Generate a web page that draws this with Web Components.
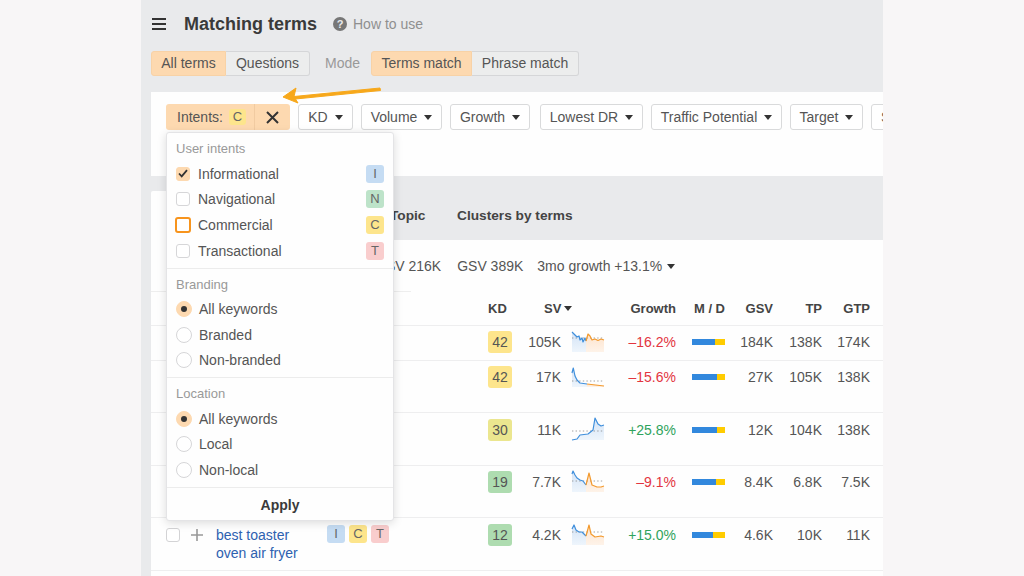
<!DOCTYPE html>
<html lang="en"><head><meta charset="utf-8"><title>Matching terms</title>
<style>
html,body{margin:0;height:100%;overflow:hidden}
body{background:#f8f6f7;font:14px/18px "Liberation Sans",Arial,sans-serif;color:#555;width:1024px;height:576px}
</style></head><body>
<x-app>
  <x-topbar title-text="Matching terms" help="How to use"></x-topbar>
  <x-controls></x-controls>
  <x-filters></x-filters>
  <x-tabs></x-tabs>
  <x-table>
    <x-summary></x-summary>
    <x-head></x-head>
    <x-row h="35" kd="42" kc="#fde58c" sv="105K" growth="–16.2%" neg sp="1" split="71" gsv="184K" tp="138K" gtp="174K"></x-row>
    <x-row h="52" kd="42" kc="#fde58c" sv="17K" growth="–15.6%" neg sp="2" split="76" gsv="27K" tp="105K" gtp="138K"></x-row>
    <x-row h="53" kd="30" kc="#ebe68f" sv="11K" growth="+25.8%" sp="3" split="75" gsv="12K" tp="104K" gtp="138K"></x-row>
    <x-row h="52" kd="19" kc="#aedcb0" sv="7.7K" growth="–9.1%" neg sp="4" split="72" gsv="8.4K" tp="6.8K" gtp="7.5K"></x-row>
    <x-row h="53" kd="12" kc="#aedcb0" sv="4.2K" growth="+15.0%" sp="5" split="64" gsv="4.6K" tp="10K" gtp="11K" control>
      <span slot="kw">best toaster oven air fryer</span>
      <x-badge slot="intents" kind="I">I</x-badge><x-badge slot="intents" kind="C">C</x-badge><x-badge slot="intents" kind="T">T</x-badge>
    </x-row>
  </x-table>
  <x-menu></x-menu>
  <x-arrow></x-arrow>
</x-app>
<script>
const def=(name,css,html)=>customElements.define(name,class extends HTMLElement{
  constructor(){super();this.attachShadow({mode:'open'})}
  connectedCallback(){const a=n=>this.getAttribute(n);this.shadowRoot.innerHTML=`<style>${css}</style>`+(typeof html==='function'?html(a,this):html);}
});
const COL={I:'#c5dcf3',N:'#bde3c9',C:'#fde58c',T:'#f9cdcd'};
def('x-app',`:host{display:block;position:relative;margin-left:141px;width:742px;height:576px;background:#e9eaec;overflow:hidden}`,`<slot></slot>`);
def('x-topbar',`:host{display:flex;align-items:center;height:48px;padding-left:11px;color:#333}
.b{width:14px;display:flex;flex-direction:column;gap:3px;margin-right:18px}.b i{height:2px;background:#333;display:block}
h1{font:bold 18px/24px "Liberation Sans",Arial,sans-serif;margin:0;color:#3a3a3a;width:149px}
.q{width:14px;height:14px;border-radius:50%;background:#777;color:#e9eaec;font:bold 11px/14px "Liberation Sans",sans-serif;text-align:center;margin-right:6px}
.h{color:#8f8f8f;font-size:14px}`,
 a=>`<div class="b"><i></i><i></i><i></i></div><h1>${a('title-text')}</h1><span class="q">?</span><span class="h">${a('help')}</span>`);
def('x-toggle',`:host{display:inline-flex;align-items:center;justify-content:center;height:25px;box-sizing:border-box;background:#eceded;border:1px solid #d5d6d8;color:#555;font-size:14px;padding-bottom:1px}
:host([on]){background:#fdd9b0;border-color:#f8d2a6;color:#555}
:host([first]){border-radius:3px 0 0 3px}:host([last]){border-radius:0 3px 3px 0;border-left:0}`,`<slot></slot>`);
def('x-controls',`:host{display:flex;align-items:center;margin:3px 0 16px 10px;height:25px}
x-toggle{flex:none}.m{color:#999;margin:0 10px 0 15px;width:36px;font-size:14px;padding-bottom:1px}`,
 `<x-toggle on first style="width:75px">All terms</x-toggle><x-toggle last style="width:84px">Questions</x-toggle><span class="m">Mode</span><x-toggle on first style="width:101px">Terms match</x-toggle><x-toggle last style="width:107px">Phrase match</x-toggle>`);
def('x-filter',`:host{display:inline-flex;align-items:center;justify-content:center;gap:7px;height:26px;box-sizing:border-box;background:#fff;border:1px solid #d9dadb;border-radius:3px;flex:none;color:#555;font-size:14px;white-space:nowrap;overflow:hidden}
.c{width:0;height:0;border:4px solid transparent;border-top:5px solid #333;border-bottom:0}`,
 (a,t)=>`<slot></slot>${t.hasAttribute('nocaret')?'':'<span class="c"></span>'}`);
def('x-badge',`:host{display:inline-flex;align-items:center;justify-content:center;width:18px;height:18px;border-radius:3px;color:#666;font-size:13px;line-height:18px;flex:none}`,
 (a,t)=>{t.style.background=COL[a('kind')];return `<slot></slot>`});
def('x-filters',`:host{display:flex;align-items:center;height:84px;box-sizing:border-box;margin-left:10px;background:#fefefe;padding:0 0 34px 15px;overflow:hidden;gap:8px}
.i{display:flex;align-items:center;width:124px;height:26px;background:#fdd9b0;border-radius:3px;flex:none;color:#555}
.l{display:flex;align-items:center;gap:5px;width:89px;height:100%;box-sizing:border-box;padding-left:11px;border-right:1px solid #f1cba1}
.x{flex:1;display:flex;justify-content:center}`,
 `<div class="i"><div class="l">Intents:<x-badge kind="C" style="height:16px;width:17px;margin-left:1px;margin-right:-1px">C</x-badge></div><div class="x"><svg width="13" height="13" viewBox="0 0 13 13"><path d="M1 1l11 11M12 1L1 12" stroke="#333" stroke-width="2" fill="none"/></svg></div></div>
 <x-filter style="width:55px">KD</x-filter><x-filter style="width:81px">Volume</x-filter><x-filter style="width:80px">Growth</x-filter><x-filter style="width:103px;margin-left:2px">Lowest DR</x-filter><x-filter style="width:131px">Traffic Potential</x-filter><x-filter style="width:73px">Target</x-filter><x-filter nocaret style="width:60px;justify-content:flex-start;padding-left:9px">S</x-filter>`);
def('x-tabs',`:host{display:flex;height:64px;padding-left:10px}
.a{width:229px;background:#fefefe;margin-top:15px;border-radius:2px 2px 0 0}
.t{font:bold 13.7px/18px "Liberation Sans",sans-serif;color:#444;align-self:center;margin-top:16px;white-space:nowrap}`,
 `<div class="a"></div><span class="t" style="margin-left:10px;width:67px">Topic</span><span class="t">Clusters by terms</span>`);
def('x-table',`:host{display:block;margin-left:10px;background:#fefefe;height:336px}`,`<slot></slot>`);
def('x-summary',`:host{display:block;height:52px;box-sizing:border-box;overflow:hidden}
.r{display:flex;height:51px;align-items:center;padding-left:224px;white-space:nowrap;font-size:14px;color:#555}
.r span:nth-child(2){margin-left:16px}.r span:nth-child(3){margin-left:14px}
.c{display:inline-block;width:0;height:0;border:4px solid transparent;border-top:5px solid #333;border-bottom:0;margin-left:5px;vertical-align:2px}
.l{width:260px;height:1px;background:#eee}`,
 `<div class="r"><span>GSV 216K</span><span>GSV 389K</span><span>3mo growth +13.1%<i class="c"></i></span></div><div class="l"></div>`);
const GRID=`display:grid;grid-template-columns:25px 25px 111px 161px 24px 49px 11px 32px 72px 16px 33px 48px 49px 48px;padding-left:15px;box-sizing:border-box;border-bottom:1px solid #eeeeef;`;
def('x-head',`:host{${GRID}height:34px;align-items:center;font:bold 13px/18px "Liberation Sans",sans-serif;color:#444}
.r{text-align:right}.sv{grid-column:6 / 9;padding-left:32px;display:flex;align-items:center;gap:3px}
.c{width:0;height:0;border:4px solid transparent;border-top:5px solid #333;border-bottom:0}`,
 `<span style="grid-column:5">KD</span><span class="sv">SV<i class="c"></i></span><span class="r" style="grid-column:9">Growth</span><span class="r" style="grid-column:11;white-space:nowrap">M / D</span><span class="r" style="grid-column:12">GSV</span><span class="r" style="grid-column:13">TP</span><span class="r" style="grid-column:14">GTP</span>`);
const SP={
 1:{b:"M0 2L3 5L5 7L7 6L8 10L10 8L11 12L13 8L14 11",o:"M14 11L16 4L18 6L20 10L23 9L26 10.5L29 9L32 10",d:8,s:14},
 2:{b:"M0 8L1.3 3L3 11L5 15L8 18L15 19",o:"M15 19L32 21",d:16,s:15},
 3:{b:"M0 22L5 21L8 17L16 16L21 12L23 0L26 6L29 8L32 7",o:"",d:13,s:32},
 4:{b:"M0 4L1 1L3 5L5 8L8 10L11 11L14 15",o:"M14 15L17 3L20 15L25 17L29 17L32 16",d:11,s:14},
 5:{b:"M0 6L2 2L4 7L7 9L10 9L14 13",o:"M14 13L17 2L19 11L23 14L29 13L32 14",d:9,s:14}};
def('x-spark',`:host{display:block;width:32px;height:22px}svg{display:block;overflow:visible}`,a=>{const p=SP[a('p')];
 const bf=p.b+`L${p.s} 22L0 22Z`;
 const of=p.o?p.o+`L32 22L${p.s} 22Z`:'';
 return `<svg width="32" height="22" viewBox="0 0 32 22"><defs><linearGradient id="gb" x1="0" y1="0" x2="0" y2="1"><stop offset="0" stop-color="#d3e3f6"/><stop offset="1" stop-color="#eef5fc"/></linearGradient><linearGradient id="go" x1="0" y1="0" x2="0" y2="1"><stop offset="0" stop-color="#fde3cc"/><stop offset="1" stop-color="#fef3e9"/></linearGradient></defs><path d="${bf}" fill="url(#gb)"/>${of?`<path d="${of}" fill="url(#go)"/>`:''}<path d="M0 ${p.d}H32" stroke="#8b8b8b" stroke-width=".8" stroke-dasharray="1.4 2.2" fill="none"/><path d="${p.b}" stroke="#3f8fdc" stroke-width="1.2" stroke-linejoin="round" fill="none"/>${p.o?`<path d="${p.o}" stroke="#f39a2e" stroke-width="1.2" stroke-linejoin="round" fill="none"/>`:''}</svg>`});
def('x-row',`:host{${GRID}align-items:start;padding-top:7px;color:#555}
:host([h="53"]){padding-top:8px}
.r{text-align:right}.kd{width:24px;height:22px;margin-top:-2px;border-radius:3px;text-align:center;line-height:22px;color:#555}
x-spark{margin-top:-3px}
.md{display:flex;height:6px;margin-top:6px}.md i{display:block;background:#3288dd}.md b{display:block;flex:1;background:#fc0}
.kw{color:#2d61b0;grid-column:3;line-height:18px;padding-right:12px}
.in{grid-column:4;display:flex;gap:4px;margin-top:-1px}
.cb{width:14px;height:14px;box-sizing:border-box;border:1px solid #d3d3d5;border-radius:3px;background:#fff;margin-top:2px}
.pl{margin-top:3px;display:block}`,
 (a,t)=>{const n=a('growth')[0]!=='+';const c=t.hasAttribute('control');t.style.height=a('h')+'px';
 return `${c?`<div class="cb"></div><svg class="pl" width="12" height="12" viewBox="0 0 12 12"><path d="M6 0V12M0 6H12" stroke="#999" stroke-width="1.6"/></svg>`:''}
 <div class="kw"><slot name="kw"></slot></div><div class="in"><slot name="intents"></slot></div>
 <div class="kd" style="grid-column:5;background:${a('kc')}">${a('kd')}</div><div class="r" style="grid-column:6">${a('sv')}</div>
 <x-spark style="grid-column:8" p="${a('sp')}"></x-spark><div class="r" style="grid-column:9;color:${n?'#e3353f':'#2fa35c'}">${a('growth')}</div>
 <div class="md" style="grid-column:11"><i style="width:${a('split')}%"></i><b></b></div>
 <div class="r" style="grid-column:12">${a('gsv')}</div><div class="r" style="grid-column:13">${a('tp')}</div><div class="r" style="grid-column:14">${a('gtp')}</div>`});
def('x-check',`:host{display:flex;align-items:center;height:25.67px;padding:0 9px;color:#555}
.b{width:14px;height:14px;box-sizing:border-box;border:1px solid #d6d6d8;border-radius:3px;margin-right:8px;display:flex;align-items:center;justify-content:center;background:#fff;flex:none}
:host([on]) .b{background:#fdd9b0;border-color:#fdd9b0}
:host([focus]) .b{border:2px solid #f7941d;width:16px;height:16px;margin:0 7px 0 -1px}
span{flex:1}`,
 (a,t)=>`<div class="b">${t.hasAttribute('on')?'<svg width="10" height="9" viewBox="0 0 10 9"><path d="M1 4.5L3.7 7.3L9 1.2" stroke="#333" stroke-width="1.8" fill="none"/></svg>':''}</div><span><slot></slot></span><x-badge kind="${a('kind')}">${a('kind')}</x-badge>`);
def('x-radio',`:host{display:flex;align-items:center;height:25.5px;padding:0 9px;color:#555}
.b{width:16px;height:16px;box-sizing:border-box;border:1px solid #d6d6d8;border-radius:50%;margin-right:7px;display:flex;align-items:center;justify-content:center;background:#fff}
:host([on]) .b{background:#fdd9b0;border-color:#fdd9b0}
:host([on]) .b::after{content:"";width:6px;height:6px;border-radius:50%;background:#333}`,
 `<div class="b"></div><slot></slot>`);
def('x-section',`:host{display:block;padding:7px 0 4px;border-bottom:1px solid #ececec}
.l{height:18px;line-height:18px;margin:0 9px 3px;color:#999;font-size:13px}`,
 a=>`<div class="l">${a('label')}</div><slot></slot>`);
def('x-menu',`:host{position:absolute;left:25px;top:132px;width:228px;height:389px;box-sizing:border-box;background:#fefefe;border:1px solid #e4e4e6;border-radius:3px;box-shadow:0 2px 10px rgba(0,0,0,.14)}
.a{text-align:center;font-weight:bold;color:#3a3a3a;line-height:34px;font-size:14px}
x-section:first-child{padding-top:5.4px}`,
 `<x-section label="User intents"><x-check on kind="I">Informational</x-check><x-check kind="N">Navigational</x-check><x-check focus kind="C">Commercial</x-check><x-check kind="T">Transactional</x-check></x-section>
 <x-section label="Branding"><x-radio on>All keywords</x-radio><x-radio>Branded</x-radio><x-radio>Non-branded</x-radio></x-section>
 <x-section label="Location"><x-radio on>All keywords</x-radio><x-radio>Local</x-radio><x-radio>Non-local</x-radio></x-section>
 <div class="a">Apply</div>`);
def('x-arrow',`:host{position:absolute;left:140px;top:84px;width:102px;height:22px;display:block}svg{display:block}`,
 `<svg width="102" height="22" viewBox="0 0 102 22"><path d="M99 4L13 12.5L15 4L2 13L17 19L14.5 15L99.5 6.5Z" fill="#f7a81b" stroke="#f7a81b" stroke-linejoin="round"/></svg>`);
</script>
</body></html>
